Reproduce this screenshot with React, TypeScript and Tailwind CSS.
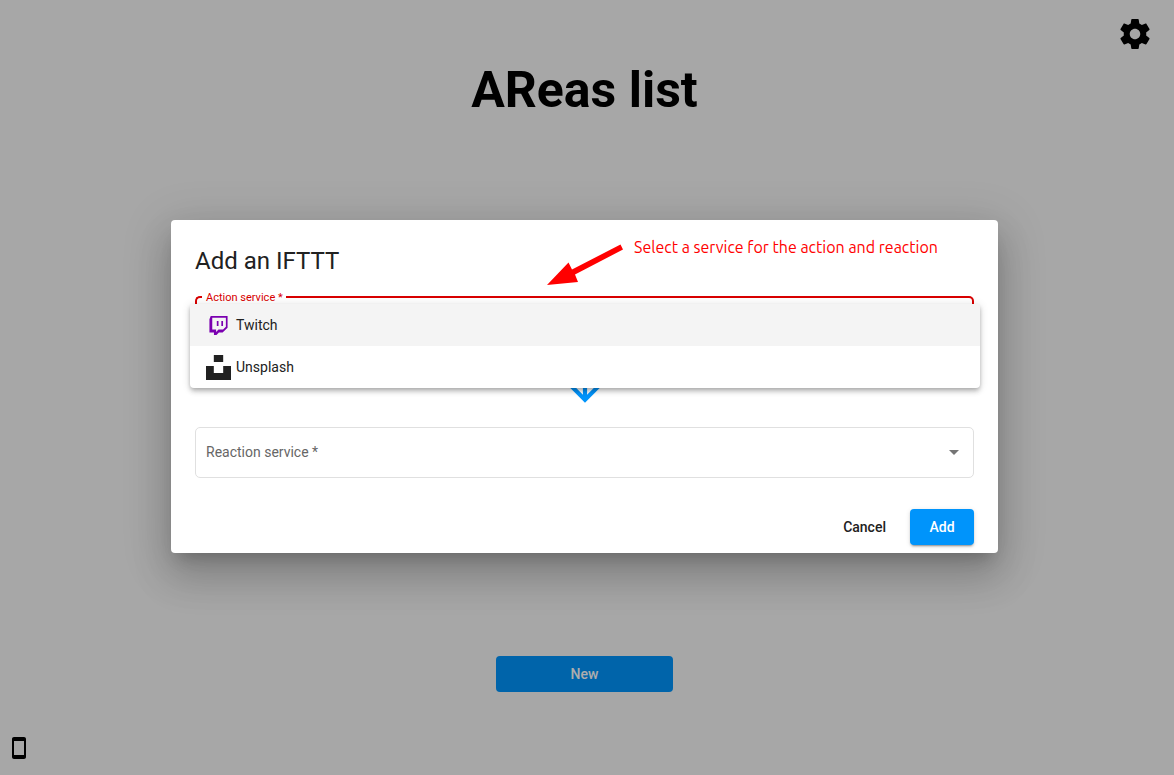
import React from "react";

function GearIcon() {
  return (
    <svg viewBox="0 0 24 24" className="size-9" fill="currentColor" aria-hidden="true">
      <path d="M19.43 12.98c.04-.32.07-.64.07-.98s-.03-.66-.07-.98l2.110-1.650c.19-.15.24-.42.12-.64l-2-3.460c-.12-.22-.39-.3-.61-.22l-2.490 1c-.52-.4-1.080-.73-1.690-.98l-.38-2.650C14.460 2.180 14.250 2 14 2h-4c-.25 0-.46.18-.49.42l-.38 2.650c-.61.25-1.170.59-1.690.98l-2.490-1c-.23-.09-.49 0-.61.22l-2 3.460c-.13.22-.07.49.12.64l2.110 1.650c-.04.32-.07.65-.07.98s.03.66.07.98l-2.110 1.650c-.19.15-.24.42-.12.64l2 3.460c.12.22.39.3.61.22l2.490-1c.52.4 1.080.73 1.690.98l.38 2.650c.03.24.24.42.49.42h4c.25 0 .46-.18.49-.42l.38-2.650c.61-.25 1.170-.59 1.690-.98l2.490 1c.23.09.49 0 .61-.22l2-3.460c.12-.22.07-.49-.12-.64l-2.110-1.650zM12 15.500c-1.930 0-3.500-1.570-3.500-3.500s1.570-3.500 3.500-3.500 3.500 1.570 3.500 3.500-1.570 3.500-3.500 3.500z" />
    </svg>
  );
}

function PhoneIcon() {
  return (
    <svg viewBox="0 0 24 24" className="size-6" fill="currentColor" aria-hidden="true">
      <path d="M17 1.01L7 1c-1.1 0-1.99.9-1.99 2v18c0 1.1.89 2 1.99 2h10c1.1 0 2-.9 2-2V3c0-1.1-.9-1.99-2-1.99zM17 19H7V5h10v14z" />
    </svg>
  );
}

function TwitchIcon() {
  return (
    <svg viewBox="0 0 24 24" className="mx-[3px] size-[19px] text-[#7b00b0]" fill="currentColor" aria-hidden="true">
      <path d="M2.149 0l-1.612 4.119v16.836h5.731v3.045h3.224l3.045-3.045h4.657l6.269-6.269v-14.686h-21.314zm19.164 13.612l-3.582 3.582h-5.731l-3.045 3.045v-3.045h-4.836v-15.045h17.194v11.463zm-3.582-7.343v6.262h-2.149v-6.262h2.149zm-5.731 0v6.262h-2.149v-6.262h2.149z" />
    </svg>
  );
}

function UnsplashIcon() {
  return (
    <svg viewBox="0 0 24 24" className="size-[25px]" fill="currentColor" aria-hidden="true">
      <path d="M7.5 6.75V0h9v6.75h-9zm9 3.75H24V24H0V10.5h7.5v6.75h9V10.5z" />
    </svg>
  );
}

function ServiceOptions() {
  return (
    <>
      <option value="" aria-label="None" />
      <option value="twitch">Twitch</option>
      <option value="unsplash">Unsplash</option>
    </>
  );
}

function ActionField() {
  return (
    <div className="relative h-[51px]">
      <select id="action" required className="size-full appearance-none bg-transparent px-3 outline-none">
        <ServiceOptions />
      </select>
      <div className="pointer-events-none absolute inset-0 flex">
        <div className="w-[7px] rounded-l-[5px] border-2 border-r-0 border-[#d80000]" />
        <div className="border-b-2 border-[#d80000] pr-[3px] pl-1">
          <label htmlFor="action" className="-mt-1.5 block text-[11px] leading-4 text-[#d80000]">
            Action service *
          </label>
        </div>
        <div className="flex-1 rounded-r-[5px] border-2 border-l-0 border-[#d80000]" />
      </div>
      <div
        role="listbox"
        aria-label="Action service"
        className="absolute top-2 -right-[6px] -left-[5px] z-10 overflow-hidden rounded-b bg-white text-sm shadow-[0_2px_4px_-1px_rgba(0,0,0,0.2),0_4px_5px_0_rgba(0,0,0,0.14),0_1px_10px_0_rgba(0,0,0,0.12)]"
      >
        <button type="button" role="option" aria-selected="false" className="flex h-[42px] w-full items-center gap-[5px] bg-[#f4f4f4] px-4">
          <TwitchIcon />
          Twitch
        </button>
        <button type="button" role="option" aria-selected="false" className="flex h-[42px] w-full items-center gap-[5px] px-4">
          <UnsplashIcon />
          Unsplash
        </button>
      </div>
    </div>
  );
}

function ReactionField() {
  return (
    <div className="relative h-[51px]">
      <select id="reaction" required className="size-full appearance-none rounded-[5px] border border-[#e0e0e0] bg-transparent px-3">
        <ServiceOptions />
      </select>
      <div className="pointer-events-none absolute inset-0 flex items-center justify-between pr-[15px] pb-px pl-[11px]">
        <label htmlFor="reaction" className="text-sm text-[#666]">
          Reaction service *
        </label>
        <svg viewBox="0 0 10 5" className="h-[5px] w-[10px] fill-[#757575]" aria-hidden="true">
          <path d="M0 0h10L5 5z" />
        </svg>
      </div>
    </div>
  );
}

function Annotation() {
  return (
    <div className="pointer-events-none absolute top-[15px] right-[60px] flex gap-[11px] text-[#f00]">
      <svg viewBox="0 0 76 42" className="mt-[9px] h-[42px] w-[76px]" fill="currentColor" aria-hidden="true">
        <path d="M0 41L21.500 18.500L25 25.500L73.500 0.500L76 5.500L28 30.500L31 38z" />
      </svg>
      <p className="font-['Ubuntu','Noto_Sans',sans-serif] text-base leading-6 whitespace-nowrap">
        Select a service for the action and reaction
      </p>
    </div>
  );
}

function AddDialog() {
  return (
    <section
      role="dialog"
      aria-modal="true"
      aria-labelledby="dialog-title"
      className="relative w-full max-w-[827px] rounded bg-white px-6 pt-[25px] pb-2 text-[#212121] shadow-[0_11px_15px_-7px_rgba(0,0,0,0.2),0_24px_38px_3px_rgba(0,0,0,0.14),0_9px_46px_8px_rgba(0,0,0,0.12)]"
    >
      <h2 id="dialog-title" className="text-2xl">
        Add an IFTTT
      </h2>
      <Annotation />
      <form className="mt-[19px]">
        <ActionField />
        <svg viewBox="0 0 24 24" className="mx-auto mt-3.5 mb-4 size-[50px] fill-[#0094fb]" aria-hidden="true">
          <path d="M20 12l-1.410-1.410L13 16.170V4h-2v12.170l-5.580-5.590L4 12l8 8 8-8z" />
        </svg>
        <ReactionField />
        <div className="mt-[31px] flex justify-end gap-2 text-sm font-medium">
          <button type="button" className="h-9 rounded px-4">
            Cancel
          </button>
          <button
            type="button"
            className="h-9 w-16 rounded bg-[#0094fb] text-white shadow-[0_3px_1px_-2px_rgba(0,0,0,0.2),0_2px_2px_0_rgba(0,0,0,0.14),0_1px_5px_0_rgba(0,0,0,0.12)]"
          >
            Add
          </button>
        </div>
      </form>
    </section>
  );
}

export default function App() {
  return (
    <div className="relative min-h-screen overflow-hidden bg-[#f6f6f6] font-['Roboto',sans-serif]">
      <main className="flex min-h-screen flex-col items-center pr-[5px] text-black">
        <div className="flex w-full justify-end px-4 pt-4">
          <button type="button" aria-label="Settings">
            <GearIcon />
          </button>
        </div>
        <h1 className="mt-2 text-[50px] leading-[60px] font-bold">AReas list</h1>
        <div className="flex-1" />
        <button type="button" className="h-9 w-[177px] rounded bg-[#0094fb] text-sm font-medium text-white">
          New
        </button>
        <div className="mt-11 flex w-full px-[7px] pb-[15px]">
          <button type="button" aria-label="Mobile app">
            <PhoneIcon />
          </button>
        </div>
      </main>
      <div className="absolute inset-0 flex items-center justify-center bg-black/32 pr-[5px] pb-[2px]">
        <AddDialog />
      </div>
    </div>
  );
}
